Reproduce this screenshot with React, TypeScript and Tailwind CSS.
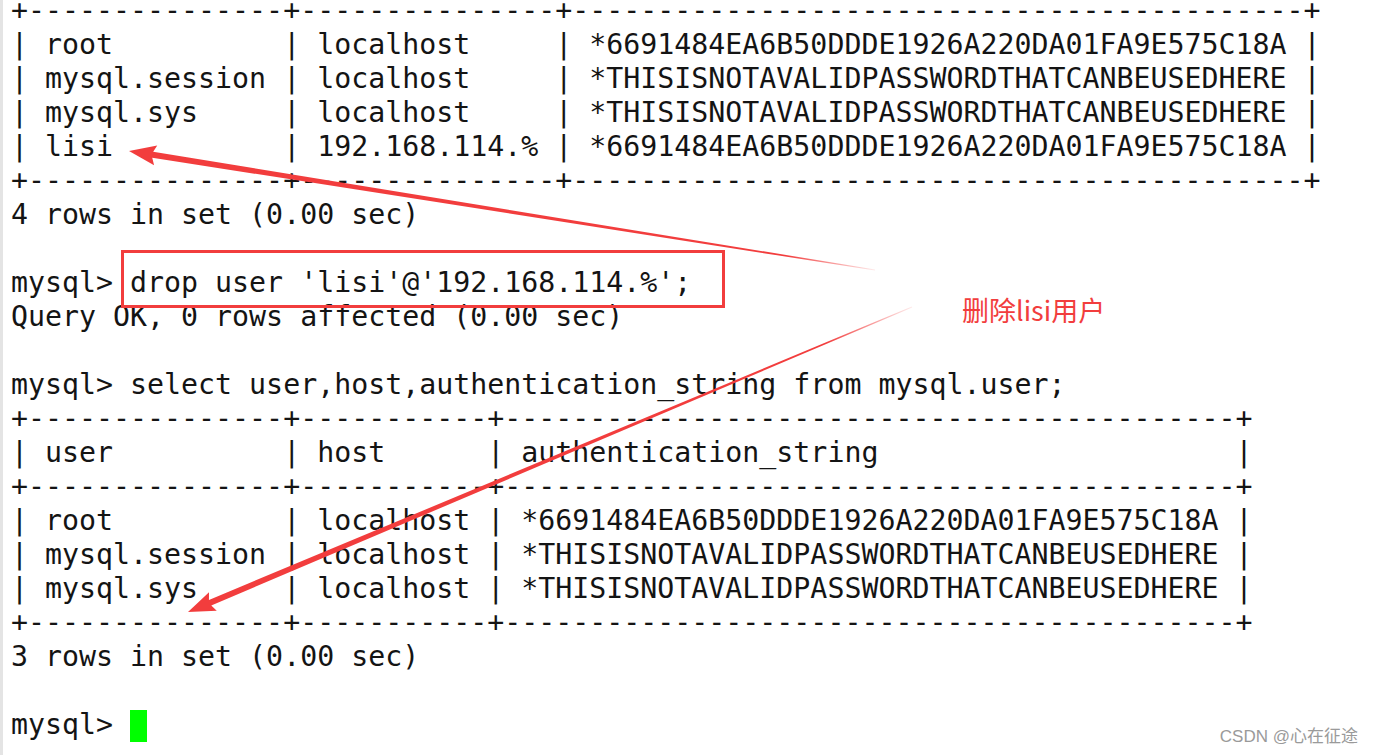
import React from 'react';

const auth1 = '*6691484EA6B50DDDE1926A220DA01FA9E575C18A';
const auth2 = '*THISISNOTAVALIDPASSWORDTHATCANBEUSEDHERE';

const border1 = '+' + '-'.repeat(15) + '+' + '-'.repeat(15) + '+' + '-'.repeat(43) + '+';
const border2 = '+' + '-'.repeat(15) + '+' + '-'.repeat(11) + '+' + '-'.repeat(43) + '+';

const lines: string[] = [
  border1,
  `| root          | localhost     | ${auth1} |`,
  `| mysql.session | localhost     | ${auth2} |`,
  `| mysql.sys     | localhost     | ${auth2} |`,
  `| lisi          | 192.168.114.% | ${auth1} |`,
  border1,
  '4 rows in set (0.00 sec)',
  '',
  "mysql> drop user 'lisi'@'192.168.114.%';",
  'Query OK, 0 rows affected (0.00 sec)',
  '',
  'mysql> select user,host,authentication_string from mysql.user;',
  border2,
  '| user          | host      | authentication_string                     |',
  border2,
  `| root          | localhost | ${auth1} |`,
  `| mysql.session | localhost | ${auth2} |`,
  `| mysql.sys     | localhost | ${auth2} |`,
  border2,
  '3 rows in set (0.00 sec)',
  '',
];

type Pt = [number, number];

// tapered arrow: thin at start, thick shaft + head at the tip
const arrowPoints = (s: Pt, e: Pt, w0: number, w1: number, len: number, half: number) => {
  const dx = e[0] - s[0];
  const dy = e[1] - s[1];
  const d = Math.hypot(dx, dy);
  const ux = dx / d;
  const uy = dy / d;
  const nx = -uy;
  const ny = ux;
  const bx = e[0] - ux * len;
  const by = e[1] - uy * len;
  const pts: Pt[] = [
    [s[0] + (nx * w0) / 2, s[1] + (ny * w0) / 2],
    [bx + (nx * w1) / 2, by + (ny * w1) / 2],
    [bx + nx * half + ux * -3, by + ny * half + uy * -3],
    e,
    [bx - nx * half + ux * -3, by - ny * half + uy * -3],
    [bx - (nx * w1) / 2, by - (ny * w1) / 2],
    [s[0] - (nx * w0) / 2, s[1] - (ny * w0) / 2],
  ];
  return pts.map((p) => p.join(',')).join(' ');
};

const Arrow: React.FC<{ id: string; from: Pt; to: Pt }> = ({ id, from, to }) => (
  <>
    <defs>
      <linearGradient id={id} gradientUnits="userSpaceOnUse" x1={from[0]} y1={from[1]} x2={to[0]} y2={to[1]}>
        <stop offset="0" stopColor="#f23d3d" stopOpacity="0.1" />
        <stop offset="0.12" stopColor="#f23d3d" stopOpacity="1" />
        <stop offset="1" stopColor="#f23d3d" stopOpacity="1" />
      </linearGradient>
    </defs>
    <polygon points={arrowPoints(from, to, 1, 6, 24, 10)} fill={`url(#${id})`} />
  </>
);

export default function App() {
  return (
    <div className="relative w-[1373px] h-[755px] overflow-hidden bg-white">
      <div className="flex h-full">
        <div className="w-[3px] shrink-0 bg-[#e4e4e4]" />
        <pre
          className="mt-[-6px] pl-[8px] text-[28.25px] leading-[34px] text-[#141414] whitespace-pre"
          style={{ fontFamily: '"DejaVu Sans Mono", "Liberation Mono", monospace' }}
        >
          {lines.map((l, i) => (
            <div key={i} className="h-[34px]">
              {l}
            </div>
          ))}
          <div className="h-[34px]">
            {'mysql> '}
            <span className="inline-block align-top mt-[2px] w-[17px] h-[32px] bg-[#00ff00]" />
          </div>
        </pre>
      </div>

      {/* annotations */}
      <div className="absolute left-[121px] top-[250px] w-[604px] h-[58px] border-[3px] border-[#f23d3d]" />

      <svg className="absolute inset-0 pointer-events-none" width="1373" height="755">
        <Arrow id="a1" from={[875, 270]} to={[129, 151]} />
        <Arrow id="a2" from={[912, 307]} to={[188, 612]} />
      </svg>

      <div
        className="absolute left-[962px] top-[293px] text-[27px] leading-[34px] text-[#f23d3d]"
        style={{ fontFamily: '"Noto Sans CJK SC", "Noto Sans", sans-serif' }}
      >
        删除lisi用户
      </div>

      <div
        className="absolute right-[15px] top-[725px] text-[17px] leading-[24px] text-[#9a9a9a]"
        style={{ fontFamily: '"Liberation Sans", "Noto Sans CJK SC", sans-serif' }}
      >
        CSDN @心在征途
      </div>
    </div>
  );
}
